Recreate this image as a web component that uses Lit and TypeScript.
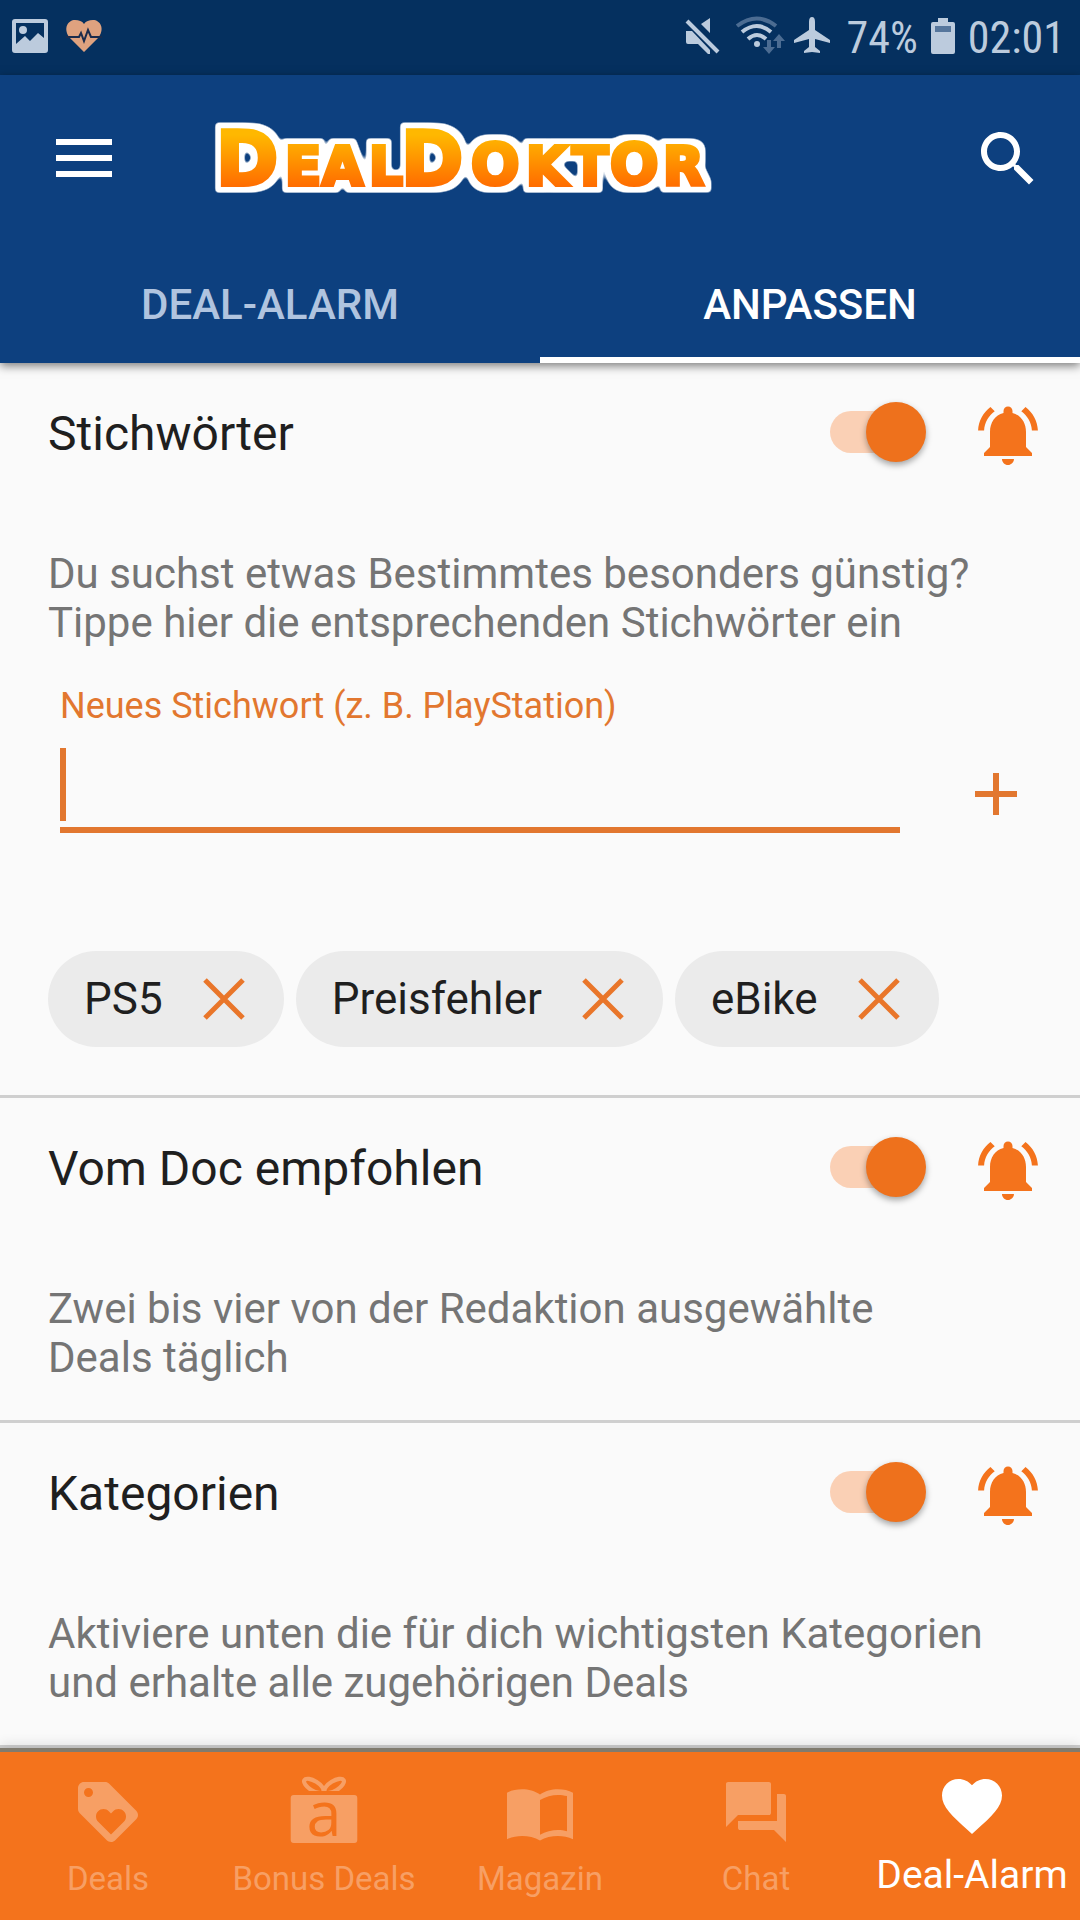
import { LitElement, html, css, svg } from "lit";
import { customElement, property, state } from "lit/decorators.js";

@customElement("dd-section-head")
class SectionHead extends LitElement {
  @property() heading = "";
  static styles = css`
    :host { display: block; }
    .head { display: flex; align-items: center; height: 144px; padding: 0 36px 0 48px; }
    h2 { flex: 1; margin: 0; padding-bottom: 3px; font-size: 48px; line-height: 56px; font-weight: 400; color: #1f1f1f; }
    .switch { appearance: none; margin: 0 46px 6px 0; width: 96px; height: 60px; display: grid; align-items: center; justify-items: end; cursor: pointer; }
    .switch::before { content: ""; grid-area: 1 / 1; justify-self: start; width: 84px; height: 42px; border-radius: 21px; background: #fad0b5; }
    .switch::after { content: ""; grid-area: 1 / 1; width: 60px; height: 60px; border-radius: 50%; background: #ee711c; box-shadow: 0 3px 6px rgba(0, 0, 0, 0.35); }
    .switch:not(:checked)::after { justify-self: start; background: #f1f1f1; }
    .bell { border: 0; padding: 0; background: none; width: 72px; height: 72px; cursor: pointer; }
    svg { display: block; width: 72px; height: 72px; fill: #f4731c; }
  `;
  render() {
    return html`<div class="head">
      <h2>${this.heading}</h2>
      <input class="switch" type="checkbox" role="switch" checked aria-label=${this.heading} />
      <button class="bell" aria-label="Benachrichtigungen">
        <svg viewBox="0 0 24 24"><path d="M7.58 4.08L6.15 2.65C3.75 4.48 2.17 7.3 2.03 10.5h2c.15-2.65 1.51-4.97 3.55-6.42zm12.39 6.42h2c-.15-3.2-1.73-6.02-4.12-7.85l-1.42 1.43c2.02 1.45 3.39 3.77 3.54 6.42zM18 11c0-3.07-1.64-5.64-4.5-6.32V4c0-.83-.67-1.5-1.5-1.5s-1.5.67-1.5 1.5v.68C7.63 5.36 6 7.92 6 11v5l-2 2v1h16v-1l-2-2v-5zm-6 11c.14 0 .27-.01.4-.04.65-.14 1.18-.58 1.44-1.18.1-.24.15-.5.15-.78h-4c.01 1.1.9 2 2.01 2z"/></svg>
      </button>
    </div>`;
  }
}

const navIcons = {
  deals: svg`<path d="M21.41 11.58l-9-9C12.05 2.22 11.55 2 11 2H4c-1.1 0-2 .9-2 2v7c0 .55.22 1.05.59 1.42l9 9c.36.36.86.58 1.41.58.55 0 1.05-.22 1.41-.59l7-7c.37-.36.59-.86.59-1.41 0-.55-.23-1.06-.59-1.42zM5.5 7C4.67 7 4 6.33 4 5.5S4.67 4 5.5 4 7 4.67 7 5.5 6.33 7 5.5 7zm11.77 8.27L13 19.54l-4.27-4.27C8.28 14.81 8 14.19 8 13.5c0-1.38 1.12-2.5 2.5-2.5.69 0 1.32.28 1.77.74l.73.72.73-.73c.45-.45 1.08-.73 1.77-.73 1.38 0 2.5 1.12 2.5 2.5 0 .69-.28 1.32-.73 1.77z"/>`,
  bonus: svg`<clipPath id="bow"><path d="M0 0h24v5H0z"/></clipPath>
    <path d="M1.900 6.300h20.200a1 1 0 0 1 1 1v14a1 1 0 0 1-1 1H1.900a1 1 0 0 1-1-1v-14a1 1 0 0 1 1-1z"/>
    <g clip-path="url(#bow)" fill="none" stroke="currentColor" stroke-width="1.400"><ellipse cx="8.600" cy="3.300" rx="3.700" ry="1.600" transform="rotate(32 8.600 3.300)"/><ellipse cx="15.400" cy="3.300" rx="3.700" ry="1.600" transform="rotate(-32 15.400 3.300)"/></g>
    <text x="12" y="20" text-anchor="middle" font-family="'Open Sans', sans-serif" font-size="21" fill="#f4731c">a</text>`,
  magazin: svg`<path d="M12 6.200C10.300 4.900 8.200 4.400 6 4.400c-1.800 0-3.600.3-5 1.200v15.500c1.600-.8 3.300-1.100 5-1.100 2.100 0 4.300.4 6 1.500 1.700-1.100 3.900-1.500 6-1.500 1.700 0 3.400.3 5 1.100V5.600c-1.400-.9-3.200-1.200-5-1.200-2.200 0-4.300.5-6 1.800zM21 18.400c-1-.3-2-.4-3-.4-1.900 0-4.300.6-6 1.600V8c1.700-1.100 4.100-1.700 6-1.700 1 0 2 .1 3 .4z"/>`,
  chat: svg`<path d="M21.300 6H19v9H6v2.300c0 .4.300.7.700.7H18l4 4V6.700c0-.4-.3-.7-.7-.7zM17 12.300V2.700c0-.4-.3-.7-.7-.7H2.700c-.4 0-.7.300-.7.700V17l4-4h10.300c.4 0 .7-.3.700-.7z"/>`,
  alarm: svg`<path d="M12 21.350l-1.450-1.320C5.400 15.360 2 12.280 2 8.500 2 5.420 4.420 3 7.500 3c1.740 0 3.410.810 4.500 2.090C13.090 3.810 14.760 3 16.500 3 19.580 3 22 5.420 22 8.500c0 3.780-3.400 6.860-8.550 11.540L12 21.350z"/>`,
};

@customElement("app-root")
class AppRoot extends LitElement {
  @state() keywords = ["PS5", "Preisfehler", "eBike"];

  static styles = css`
    :host { display: flex; flex-direction: column; min-height: 100vh; background: #fafafa; font-family: Roboto, sans-serif; color: #1f1f1f; }
    * { box-sizing: border-box; }
    button { font: inherit; border: 0; padding: 0; background: none; cursor: pointer; }
    svg { display: block; overflow: visible; }
    .status { display: flex; align-items: center; height: 75px; padding: 0 15px 3px 12px; background: #05305f; color: #bccbdd; fill: #bccbdd; font-family: "Roboto Condensed", "Liberation Sans Narrow", Roboto, sans-serif; font-size: 44px; line-height: 52px; }
    .status .left { display: flex; gap: 16px; flex: 1; }
    .status span { padding-top: 3px; }
    .appbar { background: #0d407f; color: #fff; box-shadow: 0 3px 9px rgba(0, 0, 0, 0.5); z-index: 1; }
    .tools { display: flex; align-items: center; height: 168px; padding: 0 36px 0 48px; }
    .tools button { width: 72px; height: 72px; }
    .logo { flex: 1; padding-left: 90px; }
    .logo text { font-family: "DejaVu Sans", sans-serif; font-weight: 700; }
    .tabs { display: grid; grid-template-columns: 1fr 1fr; height: 120px; }
    .tab { font-size: 42px; font-weight: 500; color: #b0c4df; padding-top: 2px; border-top: 6px solid transparent; border-bottom: 6px solid transparent; }
    .tab.on { color: #fff; border-bottom-color: #fff; }
    main { flex: 1; }
    section { border-bottom: 3px solid #cfcfcf; }
    p { margin: 0; padding: 42px 48px 38px; font-size: 42px; line-height: 49px; color: #757575; max-width: 1032px; }
    .entry { display: flex; align-items: flex-end; gap: 60px; padding: 0 48px 0 60px; }
    .entry button { padding-bottom: 3px; }
    .field { flex: 1; display: flex; flex-direction: column; }
    label { font-size: 36px; line-height: 42px; color: #e2772f; }
    .box { display: flex; align-items: flex-end; height: 106px; padding-bottom: 6px; border-bottom: 6px solid #e2772f; }
    .caret { width: 6px; height: 73px; background: #e2772f; }
    .box input { flex: 1; min-width: 0; height: 73px; border: 0; outline: 0; padding: 0 8px; background: none; font: inherit; font-size: 48px; caret-color: transparent; }
    .chips { display: flex; flex-wrap: wrap; gap: 12px; list-style: none; margin: 0; padding: 118px 48px 48px; }
    .chip { display: flex; align-items: center; gap: 40px; height: 96px; border-radius: 48px; padding: 0 39px 0 36px; background: #ebebeb; font-size: 44px; line-height: 48px; }
    nav { display: grid; grid-template-columns: repeat(5, 1fr); height: 172px; border-top: 4px solid #807b6e; background: #f4731c; box-shadow: 0 -3px 12px rgba(0, 0, 0, 0.12); }
    nav a { display: flex; flex-direction: column; align-items: center; padding-top: 24px; gap: 11px; color: #f79f64; fill: #f79f64; font-size: 33px; line-height: 40px; text-decoration: none; white-space: nowrap; }
    nav a.on { padding-top: 18px; gap: 10px; color: #fff; fill: #fff; font-size: 39px; line-height: 46px; }
  `;

  remove(word: string) {
    this.keywords = this.keywords.filter((k) => k !== word);
  }

  navItem(label: string, icon: unknown, on = false) {
    return html`<a href="#" class=${on ? "on" : ""}><svg width="72" height="72" viewBox="0 0 24 24">${icon}</svg>${label}</a>`;
  }

  render() {
    return html`
      <div class="status">
        <div class="left">
          <svg width="36" height="34" viewBox="0 0 36 34"><path fill-rule="evenodd" d="M3 0h30a3 3 0 0 1 3 3v28a3 3 0 0 1-3 3H3a3 3 0 0 1-3-3V3a3 3 0 0 1 3-3zM4 4v21l9-8 5 5 8-8 6 5V4zM11 7a4 4 0 1 1 0 8 4 4 0 0 1 0-8z"/></svg>
          <svg width="40" height="34" viewBox="0 0 40 34"><path fill="#dfa27f" d="M20 33L5 18C-1 9 4 1 11 1c4 0 7 1 9 4 2-3 5-4 9-4 7 0 12 8 6 17z"/><path fill="none" stroke="#1b2c4d" stroke-width="2" d="M2 18h13l2-4 3 8 4-11 3 7h11"/></svg>
        </div>
        <svg width="174" height="48" viewBox="0 0 174 48">
          <path d="M37 6v15l-9-9zM13 19h6l18 19v4h-2L25 32H15a2 2 0 0 1-2-2z"/>
          <path d="M14 9l31 31" stroke="#bccbdd" stroke-width="4"/>
          <g fill="none" stroke="#bccbdd" stroke-width="4"><path stroke="#4c6c92" d="M64 14q20-15 39 0"/><path d="M69 20q15-12 29 0M75 27q9-8 18 0"/></g>
          <circle cx="84" cy="32" r="3"/>
          <path fill="#4c6c92" d="M94 28h4v7h4l-6 7-6-7h4zM104 36h4v-7h4l-6-7-6 7h4z"/>
          <path d="M139 5q3 0 3 5v8l15 10v3l-15-4v8l5 4v2l-8-1-8 1v-2l5-4v-8l-15 4v-3l15-10v-8q0-5 3-5z"/>
        </svg>
        <span>74%</span>
        <svg width="50" height="48" viewBox="0 0 50 48"><path d="M20 6h10v4h5a2 2 0 0 1 2 2v28a2 2 0 0 1-2 2H15a2 2 0 0 1-2-2V12a2 2 0 0 1 2-2h5z"/><path fill="#56769c" d="M17 14h16v6H17z"/></svg>
        <span>02:01</span>
      </div>
      <header class="appbar">
        <div class="tools">
          <button aria-label="Menü"><svg width="72" height="72" viewBox="0 0 72 72" fill="#fff"><path d="M8 16h56v6H8zM8 32h56v6H8zM8 48h56v6H8z"/></svg></button>
          <div class="logo">
            <svg width="520" height="130" viewBox="0 0 520 130" role="img" aria-label="DealDoktor">
              <defs>
                <linearGradient id="g" gradientUnits="userSpaceOnUse" x1="0" y1="35" x2="0" y2="94"><stop offset="0.1" stop-color="#ffb800"/><stop offset="1" stop-color="#ff6a00"/></linearGradient>
                <filter id="rim" filterUnits="userSpaceOnUse" x="-6" y="0" width="526" height="130" color-interpolation-filters="sRGB">
                  <feMorphology in="SourceAlpha" operator="dilate" radius="6" result="wide"/>
                  <feGaussianBlur in="wide" stdDeviation="2" result="soft"/>
                  <feComponentTransfer in="soft" result="firm"><feFuncA type="linear" slope="4" intercept="-1.7"/></feComponentTransfer>
                  <feFlood flood-color="#fff"/><feComposite in2="firm" operator="in" result="white"/>
                  <feMerge><feMergeNode in="white"/><feMergeNode in="SourceGraphic"/></feMerge>
                </filter>
              </defs>
              <text y="91" font-size="75" fill="url(#g)" stroke="url(#g)" stroke-width="4" filter="url(#rim)"><tspan x="6">D</tspan><tspan font-size="53" x="75 112 159">EAL</tspan><tspan x="191">D</tspan><tspan font-size="57" x="261">O</tspan><tspan font-size="53" x="316 362">KT</tspan><tspan font-size="57" x="400">O</tspan><tspan font-size="53" x="453">R</tspan></text>
            </svg>
          </div>
          <button aria-label="Suche"><svg width="72" height="72" viewBox="0 0 24 24" fill="#fff"><path d="M15.500 14h-.790l-.280-.270C15.410 12.590 16 11.110 16 9.500 16 5.910 13.090 3 9.500 3S3 5.910 3 9.500 5.910 16 9.500 16c1.610 0 3.090-.590 4.230-1.570l.270.280v.790l5 4.990L20.490 19l-4.990-5zm-6 0C7.010 14 5 11.990 5 9.500S7.010 5 9.500 5 14 7.010 14 9.500 11.990 14 9.500 14z"/></svg></button>
        </div>
        <div class="tabs" role="tablist">
          <button class="tab" role="tab" aria-selected="false">DEAL-ALARM</button>
          <button class="tab on" role="tab" aria-selected="true">ANPASSEN</button>
        </div>
      </header>
      <main>
        <section>
          <dd-section-head heading="Stichwörter"></dd-section-head>
          <p>Du suchst etwas Bestimmtes besonders günstig? Tippe hier die entsprechenden Stichwörter ein</p>
          <div class="entry">
            <div class="field">
              <label for="word">Neues Stichwort (z. B. PlayStation)</label>
              <div class="box"><span class="caret"></span><input id="word" type="text" /></div>
            </div>
            <button aria-label="Hinzufügen"><svg width="72" height="72" viewBox="0 0 72 72"><path stroke="#e2772f" stroke-width="6" d="M15 36h42M36 15v42"/></svg></button>
          </div>
          <ul class="chips">
            ${this.keywords.map((k) => html`<li class="chip">${k}<button aria-label="${k} entfernen" @click=${() => this.remove(k)}><svg width="42" height="42" viewBox="0 0 42 42"><path stroke="#e9762a" stroke-width="5" d="M2 2l38 38M40 2L2 40"/></svg></button></li>`)}
          </ul>
        </section>
        <section>
          <dd-section-head heading="Vom Doc empfohlen"></dd-section-head>
          <p>Zwei bis vier von der Redaktion ausgewählte Deals täglich</p>
        </section>
        <section>
          <dd-section-head heading="Kategorien"></dd-section-head>
          <p>Aktiviere unten die für dich wichtigsten Kategorien und erhalte alle zugehörigen Deals</p>
        </section>
      </main>
      <nav>
        ${this.navItem("Deals", navIcons.deals)}
        ${this.navItem("Bonus Deals", navIcons.bonus)}
        ${this.navItem("Magazin", navIcons.magazin)}
        ${this.navItem("Chat", navIcons.chat)}
        ${this.navItem("Deal-Alarm", navIcons.alarm, true)}
      </nav>
    `;
  }
}
